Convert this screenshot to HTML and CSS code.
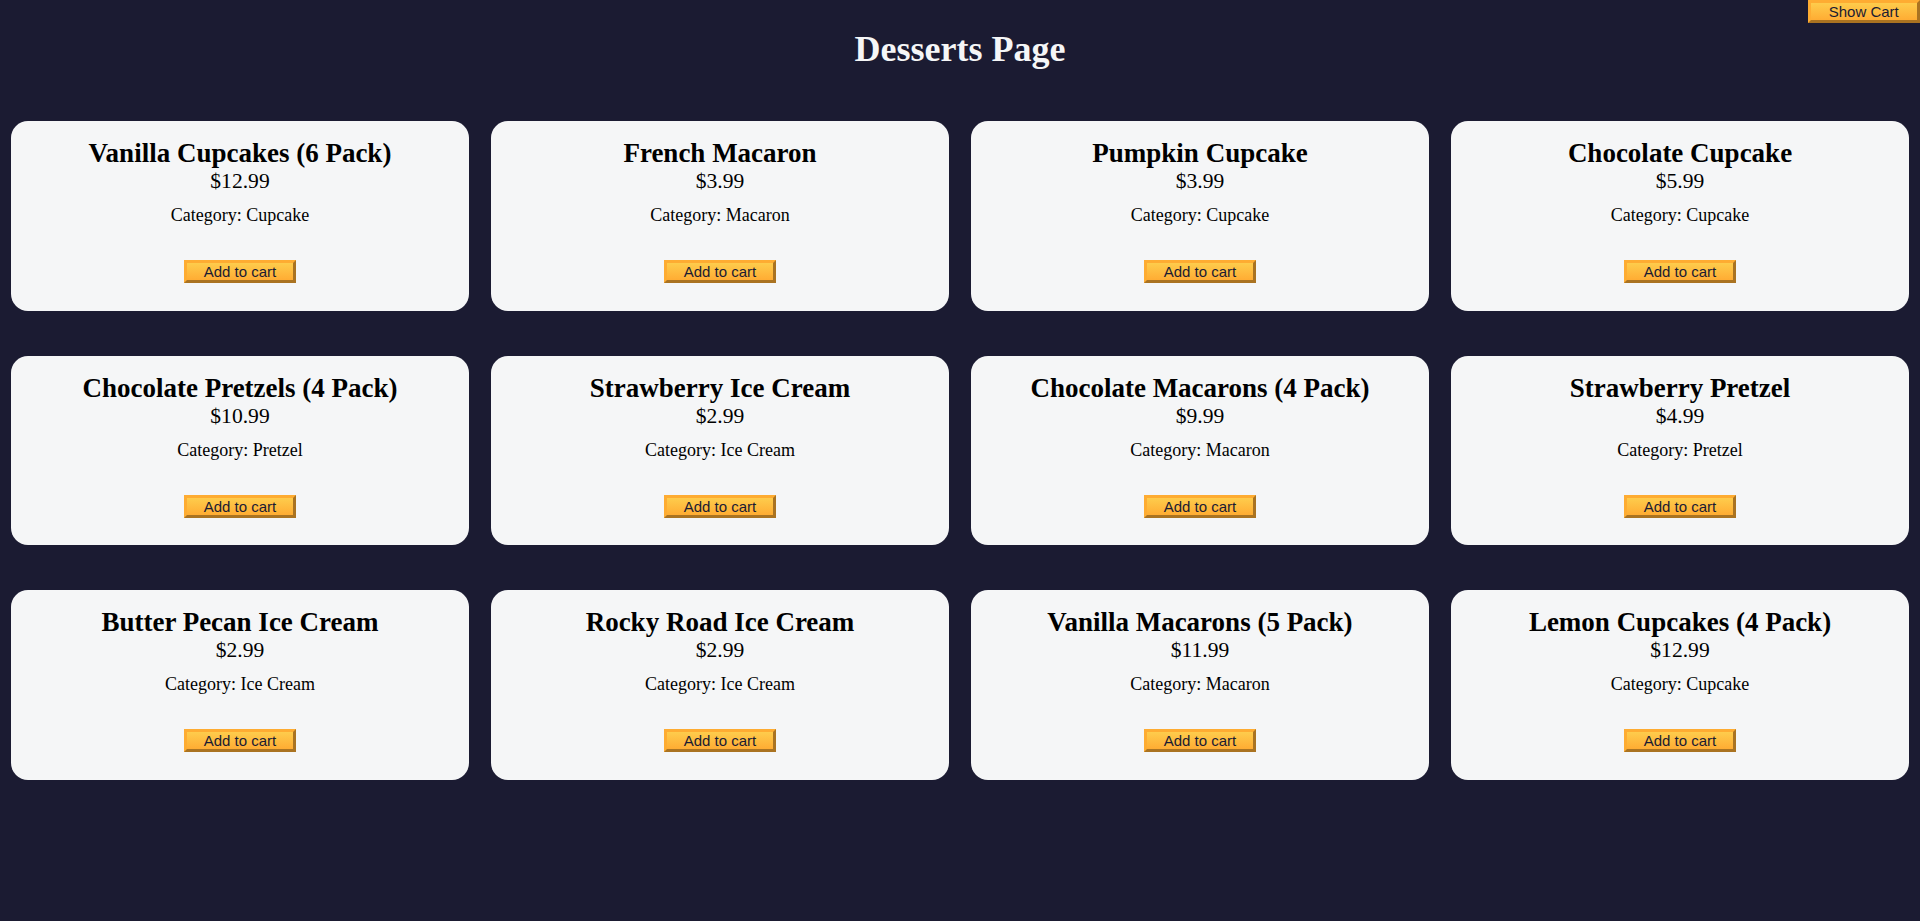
FILE: index.html
```html
<!DOCTYPE html>
<html lang="en">
<head>
<meta charset="UTF-8">
<title>Desserts Page</title>
<link rel="stylesheet" href="styles.css">
</head>
<body>
<button class="btn cart-btn" type="button">Show Cart</button>
<h1 class="title">Desserts Page</h1>
<main class="products">
  <div class="card"><h2 class="card-title">Vanilla Cupcakes (6 Pack)</h2><p class="price">$12.99</p><p class="category">Category: Cupcake</p><button class="btn add-btn" type="button">Add to cart</button></div>
  <div class="card"><h2 class="card-title">French Macaron</h2><p class="price">$3.99</p><p class="category">Category: Macaron</p><button class="btn add-btn" type="button">Add to cart</button></div>
  <div class="card"><h2 class="card-title">Pumpkin Cupcake</h2><p class="price">$3.99</p><p class="category">Category: Cupcake</p><button class="btn add-btn" type="button">Add to cart</button></div>
  <div class="card"><h2 class="card-title">Chocolate Cupcake</h2><p class="price">$5.99</p><p class="category">Category: Cupcake</p><button class="btn add-btn" type="button">Add to cart</button></div>
  <div class="card"><h2 class="card-title">Chocolate Pretzels (4 Pack)</h2><p class="price">$10.99</p><p class="category">Category: Pretzel</p><button class="btn add-btn" type="button">Add to cart</button></div>
  <div class="card"><h2 class="card-title">Strawberry Ice Cream</h2><p class="price">$2.99</p><p class="category">Category: Ice Cream</p><button class="btn add-btn" type="button">Add to cart</button></div>
  <div class="card"><h2 class="card-title">Chocolate Macarons (4 Pack)</h2><p class="price">$9.99</p><p class="category">Category: Macaron</p><button class="btn add-btn" type="button">Add to cart</button></div>
  <div class="card"><h2 class="card-title">Strawberry Pretzel</h2><p class="price">$4.99</p><p class="category">Category: Pretzel</p><button class="btn add-btn" type="button">Add to cart</button></div>
  <div class="card"><h2 class="card-title">Butter Pecan Ice Cream</h2><p class="price">$2.99</p><p class="category">Category: Ice Cream</p><button class="btn add-btn" type="button">Add to cart</button></div>
  <div class="card"><h2 class="card-title">Rocky Road Ice Cream</h2><p class="price">$2.99</p><p class="category">Category: Ice Cream</p><button class="btn add-btn" type="button">Add to cart</button></div>
  <div class="card"><h2 class="card-title">Vanilla Macarons (5 Pack)</h2><p class="price">$11.99</p><p class="category">Category: Macaron</p><button class="btn add-btn" type="button">Add to cart</button></div>
  <div class="card"><h2 class="card-title">Lemon Cupcakes (4 Pack)</h2><p class="price">$12.99</p><p class="category">Category: Cupcake</p><button class="btn add-btn" type="button">Add to cart</button></div>
</main>
</body>
</html>
```
FILE: styles.css
```css
*, *::before, *::after {
  margin: 0;
  padding: 0;
  box-sizing: border-box;
}

body {
  background-color: #1b1b32;
  font-family: "Liberation Serif", "Times New Roman", serif;
  font-size: 18px;
  color: #000;
}

.title {
  color: #f5f6f7;
  text-align: center;
  font-size: 36px;
  font-weight: bold;
  line-height: 41px;
  margin-top: 29px;
}

.products {
  display: grid;
  grid-template-columns: repeat(4, 1fr);
  column-gap: 22px;
  row-gap: 45px;
  padding: 51px 11px;
}

.card {
  background-color: #f5f6f7;
  border-radius: 17px;
  padding: 17px;
  text-align: center;
  height: 189.5px;
}

.card-title {
  font-size: 27px;
  font-weight: bold;
  line-height: 31px;
}

.price {
  font-size: 21.6px;
  line-height: 24px;
}

.category {
  font-size: 18px;
  line-height: 21px;
  margin: 12px 0 0;
}

.btn {
  width: 112.5px;
  height: 23px;
  font-family: "Liberation Sans", Arial, sans-serif;
  font-size: 15px;
  line-height: 17px;
  color: #1b1b32;
  background-color: #feac32;
  background-image: linear-gradient(#fecc4c, #ffac33);
  border: 3px outset #feac32;
  cursor: pointer;
}

.add-btn {
  display: block;
  margin: 34px auto 0;
}

.cart-btn {
  position: absolute;
  top: 0;
  right: 0;
}
```
